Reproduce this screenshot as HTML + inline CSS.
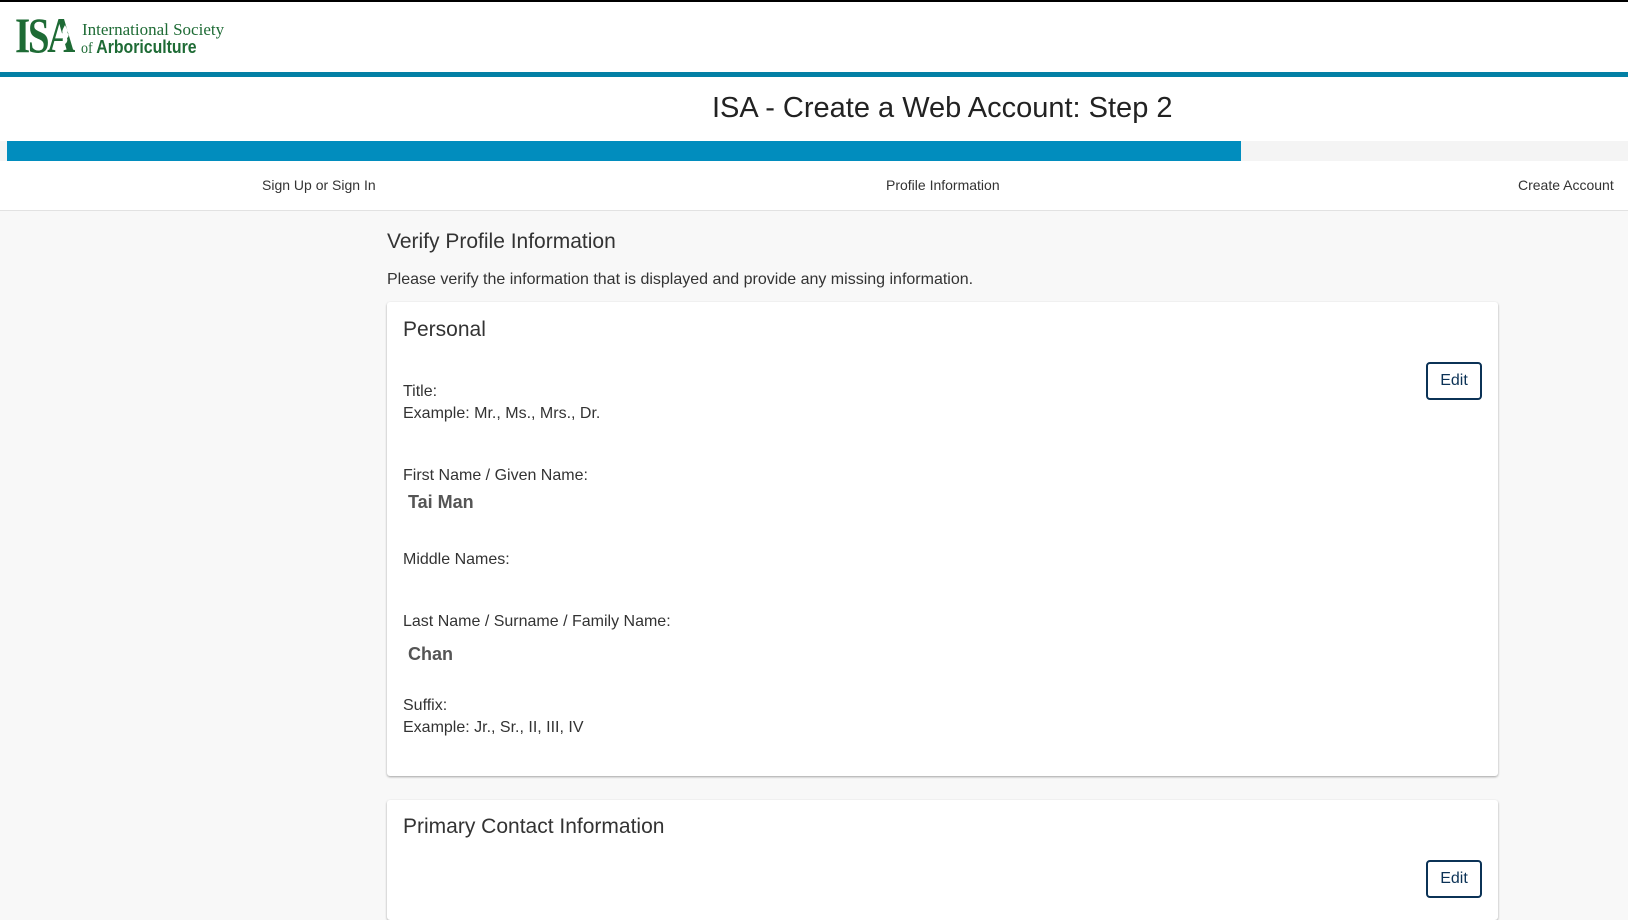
<!DOCTYPE html>
<html><head><meta charset="utf-8">
<style>
*{margin:0;padding:0;box-sizing:border-box}
body{width:1628px;height:878px;overflow:hidden;background:#f8f8f8;font-family:"Liberation Sans",Arial,sans-serif;color:#333;position:relative}
.a{position:absolute;white-space:nowrap}
.l{position:absolute;left:403px;font-size:16px;line-height:18px;color:#333;white-space:nowrap}
.v{position:absolute;left:408px;font-size:18px;line-height:20px;font-weight:bold;color:#555;white-space:nowrap}
.card{position:absolute;left:387px;width:1111px;background:#fff;border-radius:3px;box-shadow:0 1px 2px rgba(0,0,0,.35)}
.edit{position:absolute;width:56px;height:38px;border:2px solid #0b3256;border-radius:4px;color:#0b3256;font-size:16px;text-align:center;line-height:34px;background:#fff}
</style></head><body>
<div class="a" style="left:0;top:0;width:1628px;height:72px;background:#fff;border-top:2px solid #000"></div>
<div class="a" style="left:15px;top:9px;font-family:'Liberation Serif',serif;font-weight:bold;font-size:50px;line-height:52px;color:#1e6b35;transform:scaleX(.78);transform-origin:left;letter-spacing:-3px">ISA</div>
<svg class="a" style="left:59px;top:24px" width="12" height="24" viewBox="0 0 12 24"><path d="M6 1 C4 5 3 6 3.5 9 C2 10 2 13 4 14 C3 17 4.5 19 6 20 C7.5 19 9 17 8 14 C10 13 10 10 8.5 9 C9 6 8 5 6 1Z" fill="#fff"/></svg>
<div class="a" style="left:82px;top:20px;font-family:'Liberation Serif',serif;font-size:17px;color:#1e6b35">International Society</div>
<div class="a" style="left:81px;top:37px;font-size:18px;color:#1e6b35;transform:scaleX(.88);transform-origin:left"><span style="font-family:'Liberation Serif',serif;font-size:16px">of </span><b>Arboriculture</b></div>
<div class="a" style="left:0;top:72px;width:1628px;height:5px;background:#0380a5"></div>
<div class="a" style="left:0;top:77px;width:1628px;height:134px;background:#fff;border-bottom:1px solid #e2e2e2"></div>
<div class="a" style="left:712px;top:92px;font-size:29px;color:#222">ISA - Create a Web Account: Step 2</div>
<div class="a" style="left:0;top:141px;width:1628px;height:20px;background:#f4f4f4"></div>
<div class="a" style="left:7px;top:141px;width:1234px;height:20px;background:#018dbe"></div>
<div class="a" style="left:262px;top:177px;font-size:14px;color:#333">Sign Up or Sign In</div>
<div class="a" style="left:886px;top:177px;font-size:14px;color:#333">Profile Information</div>
<div class="a" style="left:1518px;top:177px;font-size:14px;color:#333">Create Account</div>
<div class="a" style="left:387px;top:230px;font-size:21px;color:#333">Verify Profile Information</div>
<div class="a" style="left:387px;top:271px;font-size:16px;color:#333">Please verify the information that is displayed and provide any missing information.</div>
<div class="card" style="top:302px;height:474px"></div>
<div class="a" style="left:403px;top:318px;font-size:21px;color:#333">Personal</div>
<div class="edit" style="left:1426px;top:362px">Edit</div>
<div class="l" style="top:383px">Title:</div>
<div class="l" style="top:405px">Example: Mr., Ms., Mrs., Dr.</div>
<div class="l" style="top:467px">First Name / Given Name:</div>
<div class="v" style="top:492px">Tai Man</div>
<div class="l" style="top:551px">Middle Names:</div>
<div class="l" style="top:613px">Last Name / Surname / Family Name:</div>
<div class="v" style="top:644px">Chan</div>
<div class="l" style="top:697px">Suffix:</div>
<div class="l" style="top:719px">Example: Jr., Sr., II, III, IV</div>
<div class="card" style="top:800px;height:120px"></div>
<div class="a" style="left:403px;top:815px;font-size:21px;color:#333">Primary Contact Information</div>
<div class="edit" style="left:1426px;top:860px">Edit</div>
</body></html>
